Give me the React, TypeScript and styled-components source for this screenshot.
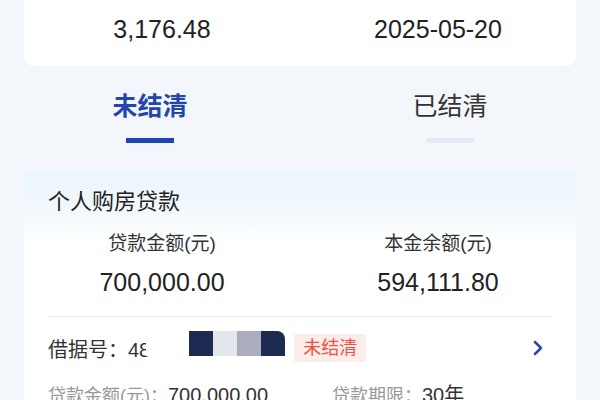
import styled, { createGlobalStyle } from 'styled-components';

const GlobalStyle = createGlobalStyle`
  html, body {
    margin: 0;
    padding: 0;
    background: #f3f6fa;
    overflow: hidden;
  }
  body {
    font-family: "Liberation Sans", "Noto Sans CJK SC", sans-serif;
    color: #222;
  }
`;

const Page = styled.div`
  width: 600px;
  height: 400px;
  overflow: hidden;
  display: flex;
  flex-direction: column;
`;

const SummaryCard = styled.div`
  margin: -34px 24px 0;
  padding: 8px 0 22px;
  background: #fff;
  border-radius: 10px;
  display: grid;
  grid-template-columns: 1fr 1fr;
`;

const Column = styled.div`
  display: flex;
  flex-direction: column;
  align-items: center;
`;

const SummaryLabel = styled.div`
  font-size: 17px;
  line-height: 22px;
  color: #777;
  margin-bottom: 18px;
`;

const BigValue = styled.div`
  font-size: 25px;
  line-height: 30px;
  color: #222;
`;

const Tabs = styled.div`
  display: grid;
  grid-template-columns: 1fr 1fr;
  margin-top: 23px;
`;

const Tab = styled.div<{ $active?: boolean }>`
  display: flex;
  flex-direction: column;
  align-items: center;
  font-size: 25px;
  line-height: 34px;
  font-weight: ${p => (p.$active ? 700 : 400)};
  color: ${p => (p.$active ? '#2446a8' : '#333')};

  &::after {
    content: '';
    width: 48px;
    height: 5px;
    margin-top: 15px;
    background: ${p => (p.$active ? '#1f45b3' : '#e6e8f6')};
  }
`;

const LoanCard = styled.div`
  margin: 27px 24px 0;
  background: linear-gradient(180deg, #eaf5fc 0, #f3f9fd 45px, #fff 72px);
  border-radius: 6px 6px 0 0;
  flex: 1;
`;

const LoanTitle = styled.div`
  padding: 17px 24px 0;
  font-size: 22px;
  line-height: 30px;
  color: #222;
`;

const AmountGrid = styled.div`
  display: grid;
  grid-template-columns: 1fr 1fr;
  margin-top: 14px;
`;

const AmountLabel = styled.div`
  font-size: 19px;
  line-height: 26px;
  color: #333;
  margin-bottom: 10px;
`;

const Divider = styled.div`
  height: 1px;
  background: #ececec;
  margin: 19px 24px 0;
`;

const Detail = styled.div`
  padding: 17px 24px 0;
`;

const IouRow = styled.div`
  display: flex;
  align-items: center;
  height: 28px;
  font-size: 20px;
  color: #333;
`;

const Masks = styled.div`
  display: flex;
  align-self: flex-start;
  margin: -3px 0 0 -4px;
`;

const Mask = styled.div<{ $color: string; $w: number; $round?: boolean }>`
  width: ${p => p.$w}px;
  height: 25px;
  background: ${p => p.$color};
  border-top-right-radius: ${p => (p.$round ? '8px' : '0')};
`;

const StatusTag = styled.span`
  margin-left: 9px;
  padding: 0 9px;
  height: 28px;
  line-height: 28px;
  font-size: 18px;
  color: #e8543f;
  background: #fdecea;
  border-radius: 3px;
`;

const Chevron = styled.div`
  margin-left: auto;
  margin-right: 8px;
  display: flex;
`;

const InfoRow = styled.div`
  display: grid;
  grid-template-columns: 284px 1fr;
  margin-top: 21px;
  line-height: 24px;
`;

const InfoItem = styled.div`
  font-size: 18px;
  color: #999;
  white-space: nowrap;

  b {
    font-weight: 400;
    font-size: 20px;
    color: #333;
  }
`;

export default function App() {
  return (
    <Page>
      <GlobalStyle />
      <SummaryCard>
        <Column>
          <SummaryLabel>本期应还(元)</SummaryLabel>
          <BigValue>3,176.48</BigValue>
        </Column>
        <Column>
          <SummaryLabel>还款日</SummaryLabel>
          <BigValue>2025-05-20</BigValue>
        </Column>
      </SummaryCard>

      <Tabs>
        <Tab $active>未结清</Tab>
        <Tab>已结清</Tab>
      </Tabs>

      <LoanCard>
        <LoanTitle>个人购房贷款</LoanTitle>
        <AmountGrid>
          <Column>
            <AmountLabel>贷款金额(元)</AmountLabel>
            <BigValue>700,000.00</BigValue>
          </Column>
          <Column>
            <AmountLabel>本金余额(元)</AmountLabel>
            <BigValue>594,111.80</BigValue>
          </Column>
        </AmountGrid>
        <Divider />
        <Detail>
          <IouRow>
            借据号：48
            <Masks>
              <Mask $color="#fff" $w={43} />
              <Mask $color="#1d2a52" $w={24} />
              <Mask $color="#e4e6ec" $w={24} />
              <Mask $color="#a9adbf" $w={24} />
              <Mask $color="#1d2a52" $w={24} $round />
            </Masks>
            <StatusTag>未结清</StatusTag>
            <Chevron>
              <svg width="12" height="16" viewBox="0 0 12 16">
                <polyline points="3,2 9,8 3,14" fill="none" stroke="#2f4a9c" strokeWidth="2.6" strokeLinecap="round" strokeLinejoin="round" />
              </svg>
            </Chevron>
          </IouRow>
          <InfoRow>
            <InfoItem>贷款金额(元)：<b>700,000.00</b></InfoItem>
            <InfoItem>贷款期限：<b>30年</b></InfoItem>
          </InfoRow>
        </Detail>
      </LoanCard>
    </Page>
  );
}
